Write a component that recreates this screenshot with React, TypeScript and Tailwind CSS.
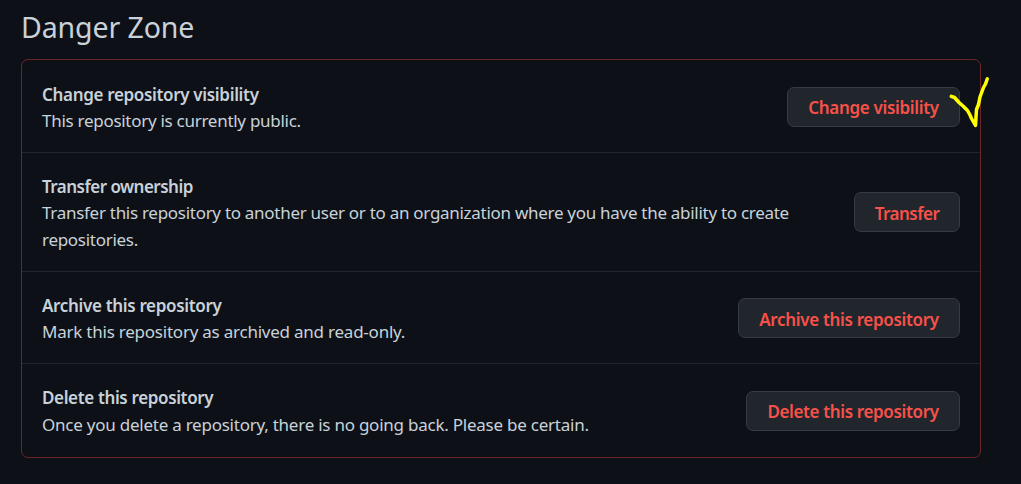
type Item = {
  title: string
  desc: string
  action: string
  row: string
  text: string
  button: string
  titleClass: string
  descClass: string
}

const items: Item[] = [
  {
    title: 'Change repository visibility',
    desc: 'This repository is currently public.',
    action: 'Change visibility',
    row: 'h-[93px] pt-[2px]',
    text: 'pt-[2px] leading-[26.5px]',
    button: 'w-[173px] pt-[2px]',
    titleClass: 'tracking-[-0.33px]',
    descClass: 'tracking-[-0.28px]',
  },
  {
    title: 'Transfer ownership',
    desc: 'Transfer this repository to another user or to an organization where you have the ability to create repositories.',
    action: 'Transfer',
    row: 'h-[119px]',
    text: 'pt-[3px] leading-[26.25px]',
    button: 'w-[106px] pt-1',
    titleClass: 'tracking-[-0.52px]',
    descClass: 'tracking-[-0.285px]',
  },
  {
    title: 'Archive this repository',
    desc: 'Mark this repository as archived and read-only.',
    action: 'Archive this repository',
    row: 'h-[92px]',
    text: 'pt-[3px] leading-[26.25px]',
    button: 'w-[222px] pt-1',
    titleClass: 'tracking-[-0.33px]',
    descClass: 'tracking-[-0.23px]',
  },
  {
    title: 'Delete this repository',
    desc: 'Once you delete a repository, there is no going back. Please be certain.',
    action: 'Delete this repository',
    row: 'h-[93px]',
    text: 'pt-[2px] leading-[26.5px]',
    button: 'w-[214px] pt-[2px]',
    titleClass: 'tracking-[-0.36px]',
    descClass: 'tracking-[-0.24px]',
  },
]

function DangerRow({ item }: { item: Item }) {
  return (
    <li
      className={`flex items-center justify-between border-b border-[#21262d] px-5 last:border-b-0 ${item.row}`}
    >
      <div className={`w-[762px] text-[17px] ${item.text}`}>
        <strong className={`block font-semibold ${item.titleClass}`}>{item.title}</strong>
        <p className={item.descClass}>{item.desc}</p>
      </div>
      <button
        type="button"
        className={`h-10 shrink-0 rounded-[7px] border border-[#363b42] bg-[#21262d] text-[17px] font-semibold whitespace-nowrap text-[#f85149] ${item.titleClass} ${item.button}`}
      >
        {item.action}
      </button>
    </li>
  )
}

export default function App() {
  return (
    <main className="relative h-[484px] w-[1021px] overflow-hidden bg-[#0d1117] pt-2 pl-[21px] font-['Noto_Sans','Open_Sans',sans-serif] text-[#c9d1d9]">
      <h2 className="h-[51px] text-[28.5px] leading-[39px] tracking-[-0.1px]">Danger Zone</h2>
      <ul className="h-[399px] w-[960px] rounded-[7px] border border-[#6b2529]">
        {items.map((item) => (
          <DangerRow key={item.title} item={item} />
        ))}
      </ul>

      {/* hand-drawn tick */}
      <svg
        className="absolute top-[70px] left-[940px]"
        width="60"
        height="64"
        viewBox="940 70 60 64"
        fill="none"
        stroke="#ffff00"
        strokeWidth="3.5"
        strokeLinecap="round"
        strokeLinejoin="round"
      >
        <path d="M951.3 96.3L954.5 97.5L959 102.5L963 106L967.5 110.5L970 115L971.5 118.5L975.5 125.5L976 117L976.5 109.5L978.5 104.5L980 97L983.5 87.5L985.5 84L987.3 78.8" />
      </svg>
    </main>
  )
}
